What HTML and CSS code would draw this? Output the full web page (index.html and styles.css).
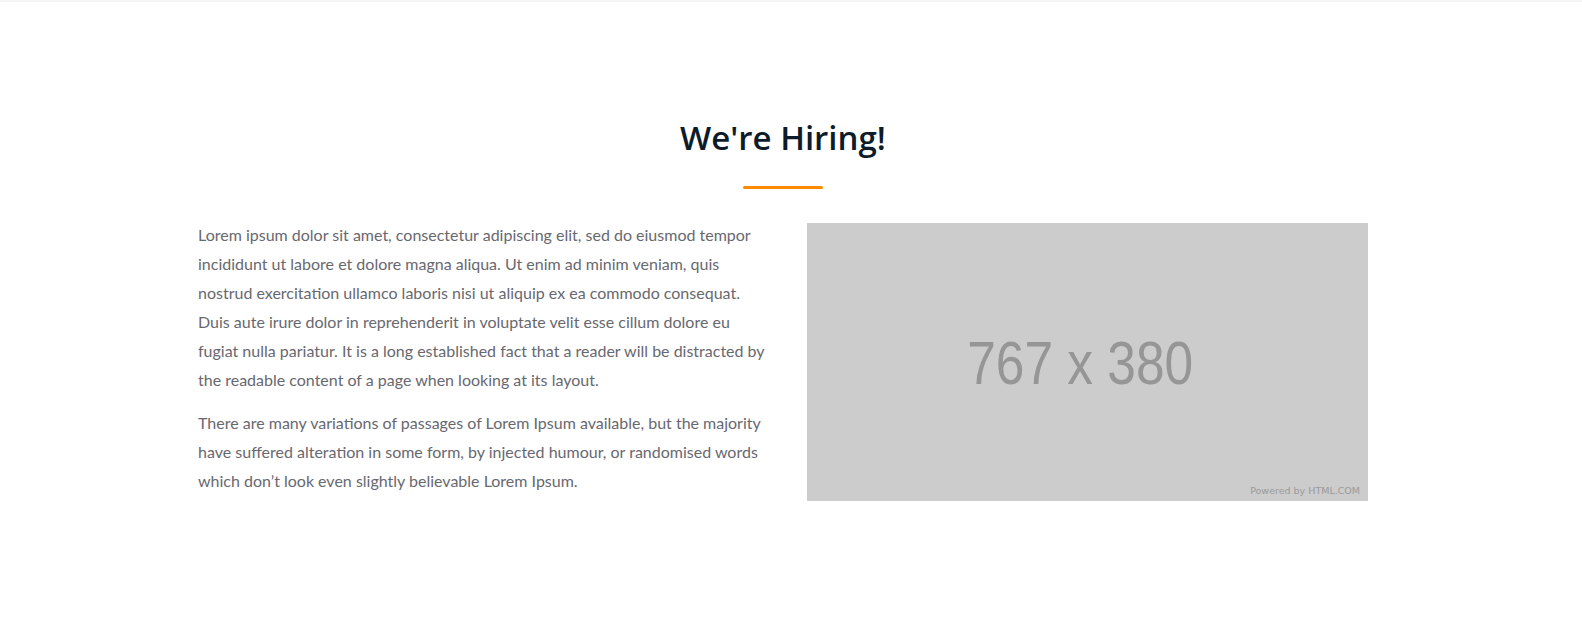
FILE: index.html
```html
<!DOCTYPE html>
<html lang="en">
<head>
<meta charset="utf-8">
<title>We're Hiring</title>
<link rel="stylesheet" href="styles.css">
</head>
<body>
<div class="topbar"></div>
<section class="hiring">
  <div class="container">
    <h2 class="title">We're Hiring!</h2>
    <div class="underline"></div>
    <div class="row">
      <div class="text">
        <p>Lorem ipsum dolor sit amet, consectetur adipiscing elit, sed do eiusmod tempor incididunt ut labore et dolore magna aliqua. Ut enim ad minim veniam, quis nostrud exercitation ullamco laboris nisi ut aliquip ex ea commodo consequat. Duis aute irure dolor in reprehenderit in voluptate velit esse cillum dolore eu fugiat nulla pariatur. It is a long established fact that a reader will be distracted by the readable content of a page when looking at its layout.</p>
        <p>There are many variations of passages of Lorem Ipsum available, but the majority have suffered alteration in some form, by injected humour, or randomised words which don’t look even slightly believable Lorem Ipsum.</p>
      </div>
      <div class="placeholder">
        <span class="dims">767 x 380</span>
        <span class="powered">Powered by HTML.COM</span>
      </div>
    </div>
  </div>
</section>
</body>
</html>
```
FILE: styles.css
```css
html, body {
  margin: 0;
  padding: 0;
  background: #ffffff;
}
body {
  font-family: "Lato", "Open Sans", sans-serif;
}
.topbar {
  height: 2px;
  background: #f4f4f4;
}
.hiring {
  padding: 113px 0 100px;
}
.container {
  width: 1170px;
  margin-left: calc(50% - 593px);
}
.title {
  margin: 0;
  text-align: center;
  font-family: "Open Sans", sans-serif;
  font-weight: 600;
  font-size: 33px;
  line-height: 46px;
  color: #0d1b2a;
}
.underline {
  width: 80px;
  height: 3px;
  border-radius: 2px;
  background: #ff8a00;
  margin: 25px auto 31px;
}
.row {
  display: flex;
  gap: 39px;
  align-items: flex-start;
}
.text {
  width: 570px;
  flex: none;
}
.text p {
  margin: 0 0 14px;
  font-size: 16px;
  line-height: 29px;
  color: #68686f;
}
.placeholder {
  position: relative;
  width: 561px;
  height: 278px;
  margin-top: 3px;
  padding-right: 15px;
  box-sizing: border-box;
  background: #cccccc;
  display: flex;
  align-items: center;
  justify-content: center;
}
.dims {
  display: inline-block;
  font-family: "Liberation Sans", Arial, sans-serif;
  font-size: 62px;
  color: #969696;
  transform: scaleX(0.83);
}
.powered {
  position: absolute;
  right: 8px;
  bottom: 5px;
  font-family: "DejaVu Sans", sans-serif;
  font-size: 9.5px;
  color: #9a9a9a;
}
```
